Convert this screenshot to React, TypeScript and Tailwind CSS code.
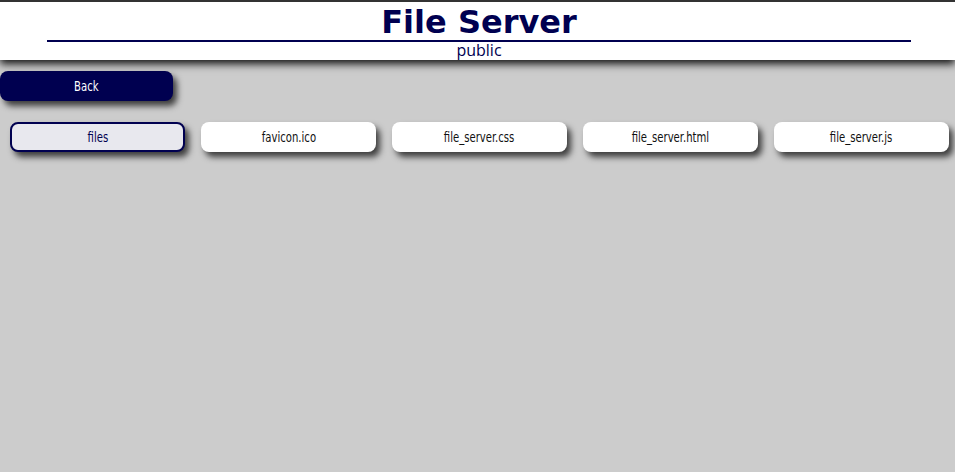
import React from 'react';

const files = ['files', 'favicon.ico', 'file_server.css', 'file_server.html', 'file_server.js'];

const narrow = { fontFamily: '"DejaVu Sans Condensed", "DejaVu Sans", sans-serif' };

const App = () => {
  return (
    <div className="min-h-screen bg-[#cccccc]">
      {/* Header */}
      <header className="relative z-10 bg-white border-t-2 border-[#333333] pb-[2px] pl-[3px] shadow-[0_4px_8px_rgba(0,0,0,0.9)]">
        <h1
          className="pt-[2px] text-center text-[32px] font-bold leading-[36px] text-[#000050]"
          style={{ fontFamily: '"DejaVu Sans", sans-serif' }}
        >
          File Server
        </h1>
        <div className="mx-auto h-[2px] w-[864px] bg-[#000050]" />
        <div
          className="pt-[1px] text-center text-[16px] leading-[15px] text-[#000050]"
          style={{ fontFamily: '"Open Sans", sans-serif' }}
        >
          public
        </div>
      </header>

      {/* Back */}
      <div className="pt-[11px]">
        <button
          className="h-[30px] w-[173px] rounded-lg bg-[#000050] text-[14px] text-white shadow-[4px_5px_6px_rgba(0,0,0,0.7)]"
          style={narrow}
        >
          <span className="inline-block scale-x-[0.8]">Back</span>
        </button>
      </div>

      {/* Files */}
      <div className="grid grid-cols-5 gap-4 pl-[10px] pr-[6px] pt-[21px]">
        {files.map((name, i) => (
          <button
            key={name}
            className={
              i === 0
                ? 'h-[30px] rounded-lg border-2 border-[#000050] bg-[#e8e8ee] text-[14px] text-[#000050] shadow-[4px_5px_6px_rgba(0,0,0,0.7)]'
                : 'h-[30px] rounded-lg bg-white text-[14px] text-[#111111] shadow-[4px_5px_6px_rgba(0,0,0,0.7)]'
            }
            style={narrow}
          >
            <span className="inline-block scale-x-[0.8]">{name}</span>
          </button>
        ))}
      </div>
    </div>
  );
};

export default App;
